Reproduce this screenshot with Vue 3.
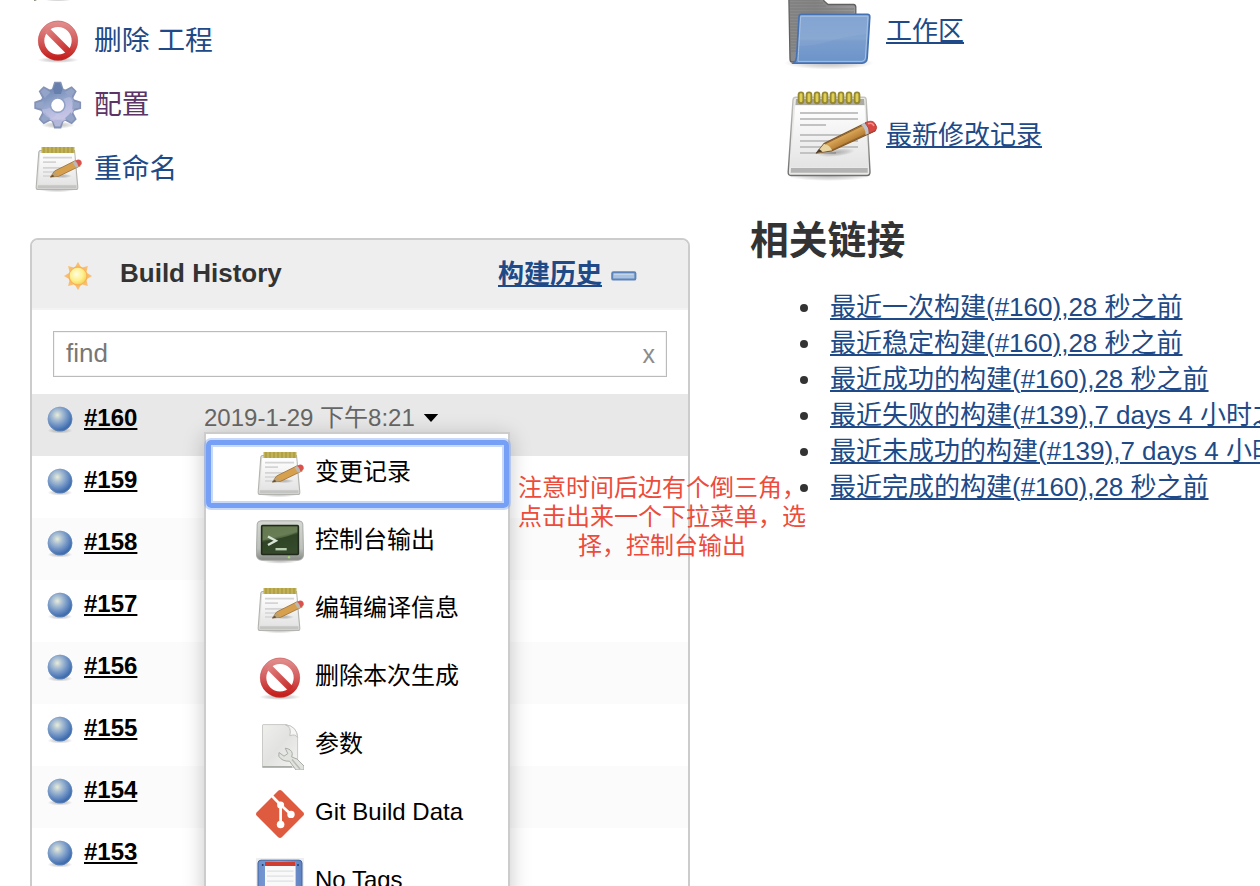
<script setup>
const tasks = [
  { icon: 'chart', label: '', kind: '' },
  { icon: 'stop', label: '删除 工程', kind: '' },
  { icon: 'gear', label: '配置', kind: 'visited' },
  { icon: 'notepad', label: '重命名', kind: '' }
]
const builds = ['#160', '#159', '#158', '#157', '#156', '#155', '#154', '#153']
const menu = [
  { icon: 'notepad', label: '变更记录' },
  { icon: 'terminal', label: '控制台输出' },
  { icon: 'notepad', label: '编辑编译信息' },
  { icon: 'stop', label: '删除本次生成' },
  { icon: 'document', label: '参数' },
  { icon: 'git', label: 'Git Build Data' },
  { icon: 'floppy', label: 'No Tags' }
]
const shortcuts = [
  { icon: 'folder', label: '工作区' },
  { icon: 'notepad-lg', label: '最新修改记录' }
]
const links = [
  '最近一次构建(#160),28 秒之前',
  '最近稳定构建(#160),28 秒之前',
  '最近成功的构建(#160),28 秒之前',
  '最近失败的构建(#139),7 days 4 小时之前',
  '最近未成功的构建(#139),7 days 4 小时之前',
  '最近完成的构建(#160),28 秒之前'
]
const teeth = [0, 45, 90, 135, 180, 225, 270, 315]
const rings = [0, 1, 2, 3, 4, 5, 6, 7]
</script>

<template>
  <div class="page">
    <svg class="sprite" width="0" height="0">
      <defs>
        <linearGradient id="gRed" x1="0" y1="0" x2="0" y2="1"><stop offset="0" stop-color="#e08a8a" /><stop offset=".5" stop-color="#d45c5c" /><stop offset="1" stop-color="#c5221f" /></linearGradient>
        <linearGradient id="gBar" gradientUnits="userSpaceOnUse" x1="12" y1="12" x2="36" y2="36"><stop offset="0" stop-color="#e08383" /><stop offset="1" stop-color="#c62825" /></linearGradient>
        <linearGradient id="gGear" x1="0" y1="0" x2=".4" y2="1"><stop offset="0" stop-color="#6580ab" /><stop offset=".5" stop-color="#93a5cb" /><stop offset="1" stop-color="#c4bfe2" /></linearGradient>
        <linearGradient id="gPaper" x1="0" y1="0" x2="0" y2="1"><stop offset="0" stop-color="#ffffff" /><stop offset="1" stop-color="#e4e4e4" /></linearGradient>
        <linearGradient id="gEdge" x1="0" y1="0" x2="0" y2="1"><stop offset="0" stop-color="#c4c4c0" /><stop offset="1" stop-color="#6f6f6f" /></linearGradient>
        <linearGradient id="gPencil" gradientUnits="userSpaceOnUse" x1="56" y1="42" x2="63" y2="56"><stop offset="0" stop-color="#edc877" /><stop offset=".5" stop-color="#d8a455" /><stop offset="1" stop-color="#b67e36" /></linearGradient>
        <linearGradient id="gFolder" x1="0" y1="0" x2="0" y2="1"><stop offset="0" stop-color="#7c9fd0" /><stop offset=".5" stop-color="#82a4d0" /><stop offset=".55" stop-color="#7a9dcd" /><stop offset="1" stop-color="#6b94cb" /></linearGradient>
        <linearGradient id="gBack" x1="0" y1="0" x2="1" y2="0"><stop offset="0" stop-color="#8b8b8b" /><stop offset=".4" stop-color="#858585" /><stop offset="1" stop-color="#999" /></linearGradient>
        <linearGradient id="gCase" x1="0" y1="0" x2="0" y2="1"><stop offset="0" stop-color="#d4d7d2" /><stop offset=".7" stop-color="#bcc0ba" /><stop offset="1" stop-color="#868983" /></linearGradient>
        <linearGradient id="gScreen" x1="0" y1="0" x2=".3" y2="1"><stop offset="0" stop-color="#54683f" /><stop offset=".45" stop-color="#5c704b" /><stop offset=".55" stop-color="#2f4325" /><stop offset="1" stop-color="#35492b" /></linearGradient>
        <linearGradient id="gDoc" x1="0" y1="0" x2="1" y2="1"><stop offset="0" stop-color="#eff0ee" /><stop offset=".5" stop-color="#e2e3e0" /><stop offset="1" stop-color="#f3f3f2" /></linearGradient>
        <linearGradient id="gFloppy" x1="0" y1="0" x2="1" y2="0"><stop offset="0" stop-color="#6d90cd" /><stop offset=".5" stop-color="#83a4da" /><stop offset="1" stop-color="#5f83c2" /></linearGradient>
        <radialGradient id="gBall" cx=".39" cy=".34" r=".66"><stop offset="0" stop-color="#e8ecd9" /><stop offset=".3" stop-color="#aabfd3" /><stop offset=".65" stop-color="#6d91c4" /><stop offset="1" stop-color="#3565a8" /></radialGradient>
        <radialGradient id="gSun" cx=".42" cy=".4" r=".6"><stop offset="0" stop-color="#fffde0" /><stop offset=".6" stop-color="#fdf08e" /><stop offset="1" stop-color="#f8d255" /></radialGradient>
        <radialGradient id="gShade"><stop offset="0" stop-color="#000" stop-opacity=".26" /><stop offset=".6" stop-color="#000" stop-opacity=".13" /><stop offset="1" stop-color="#000" stop-opacity="0" /></radialGradient>
      </defs>

      <symbol id="chart" viewBox="0 0 48 48">
        <path d="M0 46.4V48H3Z" fill="#8d957f" /><ellipse cx="24" cy="46" rx="14" ry="3" fill="url(#gShade)" />
      </symbol>

      <symbol id="stop" viewBox="0 0 48 48">
        <ellipse cx="24" cy="43" rx="21" ry="3" fill="url(#gShade)" />
        <circle cx="24" cy="23.7" r="16.8" fill="#fff" fill-opacity=".85" stroke="url(#gRed)" stroke-width="6.2" />
        <path d="M13 13 35 35" stroke="url(#gBar)" stroke-width="6.2" />
        <circle cx="24" cy="23.7" r="19.7" fill="none" stroke="#b93434" stroke-opacity=".35" stroke-width=".8" />
      </symbol>

      <symbol id="gear" viewBox="0 0 48 48">
        <ellipse cx="24" cy="44" rx="17" ry="3.5" fill="url(#gShade)" />
        <g fill="#8392b5">
          <path v-for="a in teeth" :key="a" d="M17.6 9 20.2 .8H27.2L29.8 9Z" :transform="`rotate(${a} 23.7 24.2)`" />
        </g>
        <g fill="url(#gGear)">
          <circle cx="23.7" cy="24.2" r="17" stroke="#7c8eb4" stroke-width=".8" />
        </g>
        <g fill="#94a3c8">
          <path v-for="a in teeth" :key="a" d="M19.6 10 21.4 2.4H26L27.8 10Z" :transform="`rotate(${a} 23.7 24.2)`" />
        </g>
        <path d="M19 8 21.4 2H26L28.4 8 27 13H20.5Z" fill="#667fac" />
        <path d="M18 38 23.7 32 30 38 26 45H21Z" fill="#c3c1e2" fill-opacity=".65" />
        <path d="M8 28C17 30 26 17 36 16 43 24 37 38 24 39 15 39 9 34 8 28Z" fill="#d0cff0" fill-opacity=".38" />
        <circle cx="23.7" cy="24.2" r="8" fill="#8fa0c5" /><circle cx="23.7" cy="24.2" r="6.4" fill="#fff" />
      </symbol>

      <symbol id="notepad-lg" viewBox="0 0 96 96">
        <ellipse cx="47" cy="88" rx="42" ry="5" fill="url(#gShade)" />
        <path d="M14 9.2H82Q84 9.2 84.2 12L88 84Q88 87.5 85 87.5H9Q6 87.5 6.2 84L11 12Q11.2 9.2 14 9.2Z" fill="#e9e9e7" stroke="url(#gEdge)" stroke-width="1.4" />
        <path d="M14 11H82L82.5 17H13.5Z" fill="#aaa9a2" />
        <path d="M13.3 17.5H82.6L86 79H8.4Z" fill="url(#gPaper)" />
        <path d="M9 80H85.7V84.8H8.7Z" fill="#b3b3b3" />
        <path d="M18 25H76M18 31H76M18 37H44M18 47H76M18 53H76M18 59H76M18 65H54" stroke="#c2c2c2" stroke-width="2" />
        <g fill="#e0cf55" stroke="#96882e" stroke-width="1.9"><rect v-for="i in rings" :key="i" :x="16.6 + i * 8" y="4.4" width="4.8" height="10.8" rx="2.4" /></g>
        <ellipse cx="54" cy="64.5" rx="19" ry="4" fill="url(#gShade)" transform="rotate(-6 54 64)" />
        <path d="M34.5 65 42 55.6 81 36.3 87 34.5Q94 38 93 43L50 62.8Z" fill="url(#gPencil)" stroke="#7d552a" stroke-width="1.2" stroke-linejoin="round" />
        <path d="M34.5 65 42 56Q48 57 50 62.3Z" fill="#ead5a1" /><path d="M33.5 65.6 37 61 40.5 63.5Z" fill="#4c3d2b" />
        <path d="M43 56 81 37.5M50 62 86 45" stroke="#8b5d25" stroke-width=".8" fill="none" />
        <path d="M79 36.8 83.5 34.8Q88 40 87 45.3L83.5 47Q84 41 79 36.8Z" fill="#bfc2c8" />
        <path d="M83 34.8Q90 31.3 93 35.5T93.6 42.5L87.2 45.4Q88 40 83 34.8Z" fill="#d94742" stroke="#a03b35" stroke-width=".8" /><path d="M86 35.8Q90 34 92 38" stroke="#f49591" stroke-width="1.5" fill="none" />
      </symbol>

      <symbol id="notepad" viewBox="0 0 48 48">
        <ellipse cx="23" cy="44.5" rx="19" ry="2.8" fill="url(#gShade)" />
        <path d="M6 5.5H40.5L43.8 42Q44 44.5 42 44.5H4Q2 44.5 2.2 42L4.8 7Z" fill="#e0e0de" stroke="#b3b3af" stroke-width="1.1" />
        <path d="M6.2 8H40.2L42.4 39.5H4Z" fill="url(#gPaper)" /><path d="M3.8 40.2H42.5V43.4H3.5Z" fill="#c4c4c2" />
        <path d="M9 12.7H38M9 17.2H22M9 22.8H36M9 27H31M9 31H23" stroke="#d4d4d4" stroke-width="1.7" />
        <path d="M7.5 2H40.5V8H7.5Z" fill="#c3b255" /><path d="M10 2V8M14 2V8M18 2V8M22 2V8M26 2V8M30 2V8M34 2V8M38 2V8" stroke="#a0903c" stroke-width="1" />
        <ellipse cx="28" cy="31" rx="10" ry="2.2" fill="url(#gShade)" />
        <path d="M16.4 32 20.6 26 41 15.8 46.4 20.8 24.5 31.4Z" fill="#d6a04f" stroke="#98703b" stroke-width=".8" /><path d="M17 32 20.8 26.6 24.6 31Z" fill="#bda170" /><path d="M16 32.5 18.8 29.8 20.4 31.5Z" fill="#5f4d32" />
        <path d="M38.6 17.4 41.4 15.8Q45 18 44.7 21.4L42 22.7Z" fill="#bbb9b5" /><path d="M41 15.8 44 14.5Q48.4 14.6 47.6 19.2L44.5 21.5Q44 18 41 15.8Z" fill="#d9534c" />
      </symbol>

      <symbol id="folder" viewBox="0 0 96 96">
        <ellipse cx="47" cy="79" rx="45" ry="6.5" fill="url(#gShade)" />
        <path d="M6.8 10H37Q40 11 42 17L46 20.5H71.5Q73.8 20.8 73.8 23V32L70 78H10Q8 78 8 75Z" fill="url(#gBack)" stroke="#606060" stroke-width="1.3" />
        <path d="M8 16H38M8 19H41M8 22H44M8 25H72M8 28H72M8 31H20M8 34H20M8 37H19M8 40H18M8 43H17M8 46H17M8 49H16M8 52H16M8 55H15M8 58H15M8 61H14M8 64H14M8 67H14" stroke="#7b7b7b" stroke-width="1" />
        <path d="M19 30.3H85.5Q88 30.3 87.8 33L85.2 74Q84.8 79 80 79.2H11.5Q14.3 77 14.6 73L17 33Q17.2 30.3 19 30.3Z" fill="url(#gFolder)" stroke="#4471b2" stroke-width="1.6" />
        <path d="M18.7 32.3H86L83.4 74Q83 77 80 77.4H16Q16.3 70 18.7 32.3Z" fill="none" stroke="#a6c0e2" stroke-width="1" />
        <path d="M19 33H86L84.5 50Q60 53 45 58 30 62 17 62Z" fill="#fff" fill-opacity=".06" />
      </symbol>

      <symbol id="terminal" viewBox="0 0 48 48">
        <ellipse cx="24" cy="43" rx="18" ry="2.8" fill="url(#gShade)" />
        <path d="M5 2.8H43Q46.5 3 46.8 6L47.6 36Q47.6 42 42 42.2H6Q.4 42 .4 36L1.2 6Q1.5 3 5 2.8Z" fill="url(#gCase)" stroke="#a2a5a0" stroke-width=".9" />
        <rect x="5.6" y="7.6" width="36.8" height="28.8" rx="1" fill="url(#gScreen)" stroke="#20291b" stroke-width="1.5" />
        <path d="M7 8.8H41V14Q26 22 7 22Z" fill="#8ba072" fill-opacity=".28" />
        <path d="M12 18.5 19.8 22.8 12 27" fill="none" stroke="#d9e6d7" stroke-width="2.4" /><path d="M19.5 31.2H30.7" stroke="#b7cdb0" stroke-width="2.4" />
        <circle cx="33" cy="39.2" r="1.2" fill="#a4d873" />
      </symbol>

      <symbol id="document" viewBox="0 0 48 48">
        <path d="M7 2.6H30Q41 5.5 41.6 15V45.3H6.5V3Z" fill="url(#gDoc)" stroke="#c9cbc7" stroke-width="1" />
        <path d="M6.5 44H36V45.7H6.5Z" fill="#aaaca8" />
        <path d="M29.5 2.8Q36 5 33.8 13.8 39 11.5 41.6 15.5 41 4 29.5 2.8Z" fill="#f6f6f5" stroke="#bcbeba" stroke-width=".9" />
        <path d="M29.2 26.2Q35.5 27 36.3 31.5L35.7 35 41 37 48 44V48H40L33.5 39.2Q26 39.5 22.8 34.2L23 30.5 28 34.2 31.8 31.6Z" fill="#e1e3df" stroke="#a9aca7" stroke-width="1" />
        <path d="M36 37.5 44 47" stroke="#b7bab5" stroke-width="1.4" />
      </symbol>

      <symbol id="git" viewBox="0 0 48 48">
        <path d="M22.2 .8Q24 -.8 25.8 .8L47.2 22.2Q48.8 24 47.2 25.8L25.8 47.2Q24 48.8 22.2 47.2L.8 25.8Q-.8 24 .8 22.2Z" fill="#df5b40" />
        <path d="M15.5 5.5 24.6 14.7V34.5M24.6 14.7 35 24.4" stroke="#fff" stroke-width="2.7" fill="none" />
        <g fill="#fff"><circle cx="24.6" cy="15" r="3.5" /><circle cx="35" cy="24.4" r="3.7" /><circle cx="24.6" cy="34.5" r="3.8" /></g>
      </symbol>

      <symbol id="floppy" viewBox="0 0 48 48">
        <path d="M0 0H48V48H0Z" fill="#eee" />
        <path d="M5 2.2H43Q46 2.3 46 5V48H2V5Q2 2.3 5 2.2Z" fill="url(#gFloppy)" stroke="#41629f" stroke-width="1" />
        <path d="M9 4H39.6V28H9Z" fill="#f9f9fa" /><path d="M9 4H39.6V8H9Z" fill="#ce3c32" />
        <path d="M11 13.2H37.5M11 18.2H37.5M11 23.2H37.5" stroke="#dedfe2" stroke-width="1.2" />
        <circle cx="6.7" cy="7" r="1" fill="#293a62" /><circle cx="42" cy="7" r="1" fill="#293a62" />
      </symbol>

      <symbol id="ball" viewBox="0 0 32 32">
        <ellipse cx="16" cy="26.6" rx="12.5" ry="3" fill="url(#gShade)" /><circle cx="16" cy="15" r="12.3" fill="url(#gBall)" /><circle cx="16" cy="15" r="11.9" fill="none" stroke="#7d9cc5" stroke-opacity=".55" stroke-width=".8" />
      </symbol>

      <symbol id="sun" viewBox="0 0 32 32">
        <path v-for="a in teeth" :key="a" d="M13 7 16 2 19 7Z" fill="#f9bd70" :transform="`rotate(${a} 16 16)`" />
        <circle cx="16" cy="16" r="9" fill="url(#gSun)" stroke="#f7b25a" stroke-width="1.3" />
      </symbol>
    </svg>

    <aside class="side">
      <nav class="tasks">
        <a v-for="t in tasks" :key="t.icon" class="task" :class="t.kind">
          <svg class="icon"><use :href="'#' + t.icon" /></svg>
          <span class="task-label">{{ t.label }}</span>
        </a>
      </nav>

      <section class="history">
        <header class="history-head">
          <svg class="sun"><use href="#sun" /></svg>
          <h2>Build History</h2>
          <a class="trend">构建历史</a>
          <svg class="minus" viewBox="0 0 26 10"><rect x="1.2" y="1.2" width="23.2" height="7.4" rx="1.2" fill="#a9c2e1" stroke="#5c84b9" stroke-width="2" /><path d="M3 3.3H22.6" stroke="#cbdaec" stroke-width="1" /></svg>
        </header>
        <div class="search"><span>find</span><span class="clear">x</span></div>
        <div class="builds">
          <div v-for="(b, i) in builds" :key="b" class="build">
            <svg class="ball"><use href="#ball" /></svg>
            <a class="number">{{ b }}</a>
            <template v-if="i === 0">
              <span class="date">2019-1-29 下午8:21</span>
              <svg class="caret" viewBox="0 0 16 10"><path d="M.8 1H15.2L8 9Z" fill="#000" /></svg>
            </template>
          </div>
        </div>
      </section>
    </aside>

    <main class="main">
      <a v-for="s in shortcuts" :key="s.icon" class="shortcut">
        <svg class="icon-lg"><use :href="'#' + s.icon" /></svg>
        <span>{{ s.label }}</span>
      </a>
      <h1>相关链接</h1>
      <ul class="links">
        <li v-for="l in links" :key="l"><a>{{ l }}</a></li>
      </ul>
    </main>

    <div class="menu">
      <div v-for="(m, i) in menu" :key="m.label" class="item" :class="{ focused: i === 0 }">
        <svg class="icon"><use :href="'#' + m.icon" /></svg>
        <span>{{ m.label }}</span>
      </div>
    </div>

    <p class="note">注意时间后边有个倒三角，<br />点击出来一个下拉菜单，选<br />择，控制台输出</p>
  </div>
</template>

<style>
body { margin: 0; background: #fff; overflow: hidden; }
</style>

<style scoped>
.page { position: relative; display: flex; width: 1260px; height: 886px; overflow: hidden; background: #fff; color: #333; font: 26px "Liberation Sans", "Noto Sans CJK SC", sans-serif; }
.page * { box-sizing: border-box; }
.sprite { position: absolute; }
svg { display: block; flex: none; }
.icon { width: 48px; height: 48px; }
.icon-lg { width: 96px; height: 96px; }
.side { width: 660px; margin-left: 30px; flex: none; }
.tasks { margin-top: -55px; padding-left: 4px; height: 293px; }
.task { display: flex; align-items: center; gap: 12px; height: 64px; color: #204a87; font-size: 27.8px; line-height: 40px; }
.task-label { margin-top: 0; }
.task.visited { color: #5c3566; }
.history { height: 700px; border: 2px solid #ccc; border-radius: 8px; overflow: hidden; }
.history-head { display: flex; align-items: center; height: 70px; padding-left: 30px; background: #eee; border-bottom: 2px solid #f3f3f3; }
.sun { width: 32px; height: 32px; margin-top: 3px; }
h2 { margin: -2px 0 0 26px; font-size: 26px; line-height: 36px; width: 378px; }
.trend { color: #204a87; font-weight: bold; line-height: 36px; text-decoration: underline 2px; text-underline-offset: 2px; }
.minus { width: 26px; height: 10px; margin: 3px 0 0 9px; }
.search { display: flex; justify-content: space-between; align-items: center; height: 46px; margin: 21px 21px 17px; padding: 0 11px 2px 12px; border: 1px solid #bbb; box-shadow: inset 0 0 0 1px #f4f4f4; color: #777; }
.clear { font-size: 25px; color: #8c8c8c; margin-top: 2px; }
.build { display: flex; align-items: flex-start; height: 62px; padding: 10px 0 0 12px; font-size: 24px; line-height: 28px; }
.build:nth-child(odd) { background: #fbfbfb; }
.build:first-child { background: #e8e8e8; }
.ball { width: 32px; height: 32px; }
.number { margin-left: 8px; width: 120px; color: #000; font-weight: bold; text-decoration: underline 2px; text-underline-offset: 2px; }
.date { color: #666; white-space: nowrap; }
.caret { width: 16px; height: 10px; margin: 9px 0 0 8px; }
.main { margin-left: 61px; margin-top: -16px; width: 509px; flex: none; }
.shortcut { display: flex; align-items: center; gap: 8px; height: 96px; margin: 0 0 8px 31px; color: #204a87; }
.shortcut span { line-height: 36px; margin-top: -2px; text-decoration: underline 2px; text-underline-offset: 2px; }
h1 { margin: 29px 0 0 -1px; font-size: 38.8px; line-height: 56px; }
.links { margin: 20px 0 0; padding: 0 0 0 49px; list-style: none; }
.links li { display: flex; align-items: center; gap: 22px; height: 36px; white-space: nowrap; line-height: 36px; }
.links li::before { content: ""; width: 8px; height: 8px; border-radius: 50%; background: #333; flex: none; margin-top: 2px; }
.links a { color: #204a87; text-decoration: underline 2px; text-underline-offset: 2px; }
.menu { position: absolute; left: 204px; top: 432px; width: 306px; padding-top: 6px; border: 2px solid #ccc; background: #fff; box-shadow: 0 4px 20px rgba(0, 0, 0, .22); color: #000; font-size: 24px; }
.item { position: relative; display: flex; align-items: center; gap: 11px; height: 68px; padding-left: 50px; }
.item span { margin-top: -4px; line-height: 36px; }
.focused::after { content: ""; position: absolute; inset: 0 -1px 0 0; border: 5px solid #75a0f5; border-radius: 5px; box-shadow: 0 0 0 2px rgba(117, 160, 245, .4), inset 0 0 0 2px #c8d9fb; }
.note { position: absolute; left: 508px; top: 473px; width: 308px; margin: 0; color: #ed4b3b; font-size: 24px; line-height: 29px; text-align: center; white-space: nowrap; }
</style>
